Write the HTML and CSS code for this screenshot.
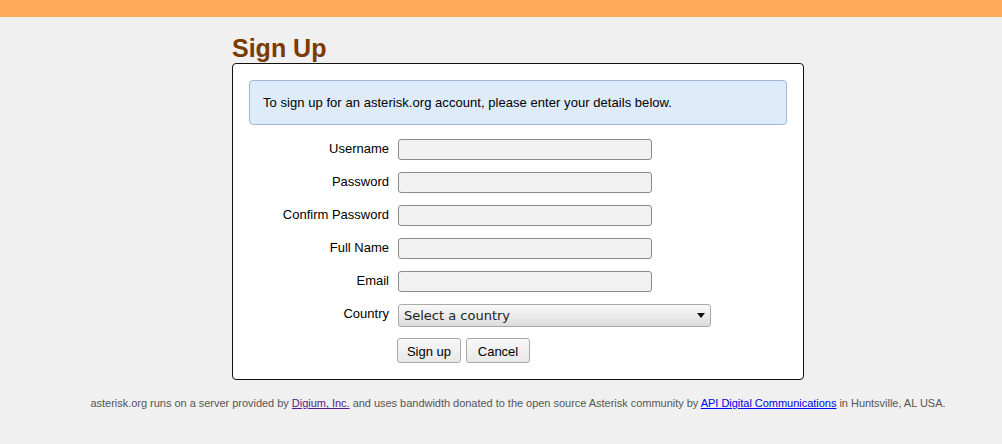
FILE: index.html
```html
<!DOCTYPE html>
<html lang="en">
<head>
    <meta charset="UTF-8">
    <title>Sign Up - asterisk.org</title>
    <link rel="stylesheet" href="styles.css">
</head>
<body>
    <div class="topbar"></div>

    <div class="page">
        <h1>Sign Up</h1>

        <div class="box">
            <div class="info">To sign up for an asterisk.org account, please enter your details below.</div>

            <form class="signup-form">
                <label for="username">Username</label>
                <input type="text" id="username">

                <label for="password">Password</label>
                <input type="password" id="password">

                <label for="confirm">Confirm Password</label>
                <input type="password" id="confirm">

                <label for="fullname">Full Name</label>
                <input type="text" id="fullname">

                <label for="email">Email</label>
                <input type="text" id="email">

                <label for="country">Country</label>
                <span class="select-wrap">
                    <select id="country">
                        <option>Select a country</option>
                    </select>
                </span>

                <span></span>
                <div class="actions">
                    <button type="submit">Sign up</button>
                    <button type="button">Cancel</button>
                </div>
            </form>
        </div>

        <!-- footer -->
        <div class="footer">
            asterisk.org runs on a server provided by <a href="#" class="visited">Digium, Inc.</a> and uses bandwidth donated to the open source Asterisk community by <a href="#">API Digital Communications</a> in Huntsville, AL USA.
        </div>
    </div>
</body>
</html>
```

FILE: styles.css
```css
body {
    margin: 0;
    background: #f0f0f0;
    font-family: 'Liberation Sans', Arial, sans-serif;
    font-size: 13px;
    color: #000;
}

.topbar {
    height: 17px;
    background: #ffaa5a;
}

.page {
    width: 572px;
    margin: 17px 0 0 232px;
}

h1 {
    margin: 0 0 1px 0;
    font-size: 25px;
    line-height: 28px;
    color: #7a3a00;
}

.box {
    background: #fff;
    border: 1px solid #111;
    border-radius: 4px;
    padding: 16px;
}

.info {
    background: #ddebfb;
    border: 1px solid #9fb8d6;
    border-radius: 4px;
    padding: 14px 13px;
    line-height: 15px;
    letter-spacing: 0.05px;
}

.signup-form {
    display: grid;
    grid-template-columns: 140px auto;
    column-gap: 9px;
    row-gap: 12px;
    align-items: start;
    justify-items: start;
    margin-top: 14px;
}

.signup-form label {
    justify-self: end;
    padding-top: 2px;
    line-height: 15px;
}

.signup-form input {
    box-sizing: border-box;
    width: 254px;
    height: 21px;
    margin: 0;
    padding: 0 4px;
    background: #f2f2f2;
    border: 1px solid #8a8a8a;
    border-radius: 3px;
    font-family: inherit;
    font-size: 13px;
}

.select-wrap {
    position: relative;
    display: block;
}

.select-wrap::after {
    content: "";
    position: absolute;
    right: 6px;
    top: 9px;
    border-left: 4px solid transparent;
    border-right: 4px solid transparent;
    border-top: 5px solid #111;
    pointer-events: none;
}

.select-wrap select {
    appearance: none;
    box-sizing: border-box;
    width: 313px;
    height: 23px;
    margin: 0;
    padding: 0 5px;
    background: linear-gradient(#fafafa, #dcdcdc);
    border: 1px solid #a9a9a9;
    border-radius: 3px;
    font-family: 'DejaVu Sans', sans-serif;
    font-size: 13px;
    color: #222;
}

.actions {
    display: flex;
    gap: 5px;
    margin: -1px 0 0 -1px;
}

.actions button {
    box-sizing: border-box;
    width: 64px;
    height: 25px;
    margin: 0;
    padding: 2px 0 0;
    background: linear-gradient(#f8f8f8, #e8e8e8);
    border: 1px solid #a8a8a8;
    border-radius: 3px;
    font-family: inherit;
    font-size: 13px;
    color: #000;
}

.footer {
    margin: 17px -220px 0;
    text-align: center;
    font-size: 11px;
    line-height: 13px;
    letter-spacing: -0.025px;
    color: #555;
}

.footer a {
    color: #0000ee;
}

.footer a.visited {
    color: #551a8b;
}
```
